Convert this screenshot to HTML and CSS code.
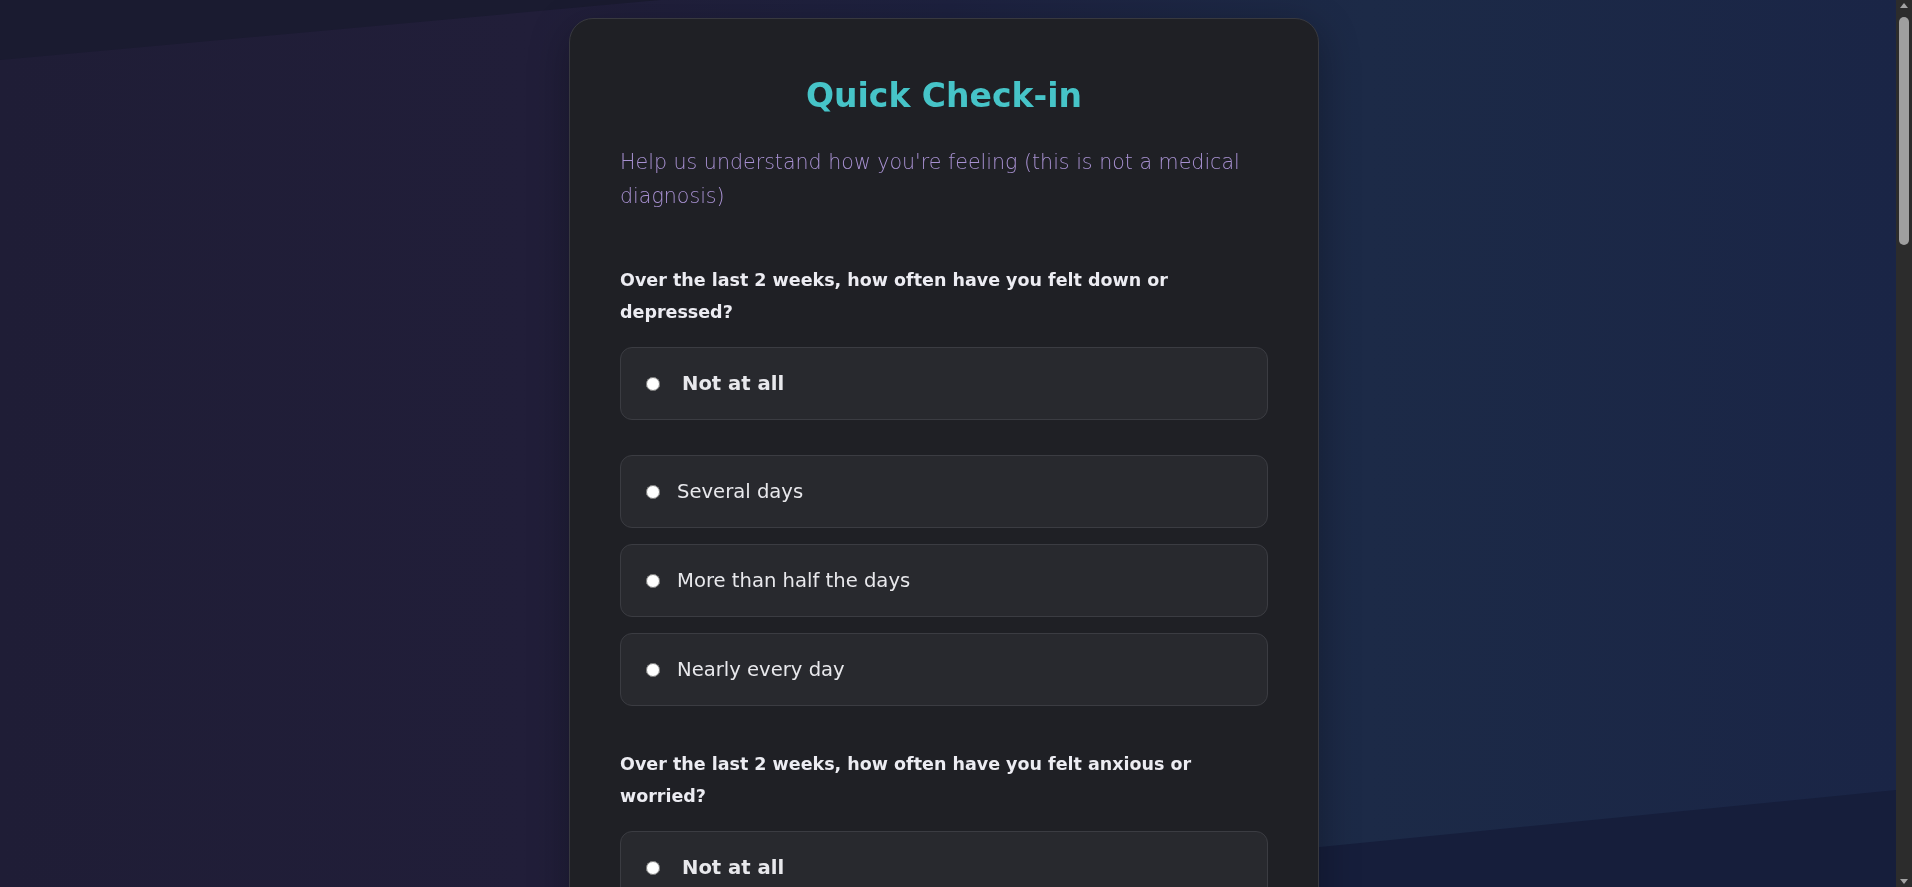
FILE: index.html
```html
<!DOCTYPE html>
<html lang="en">
<head>
<meta charset="utf-8">
<title>Quick Check-in</title>
<link rel="stylesheet" href="styles.css">
</head>
<body>
<div class="backdrop" aria-hidden="true">
  <svg viewBox="0 0 1896 887" preserveAspectRatio="none">
    <defs>
      <linearGradient id="bg" x1="0" y1="0" x2="1" y2="0">
        <stop offset="0" stop-color="#1f1d36"/>
        <stop offset="0.28" stop-color="#211e39"/>
        <stop offset="0.5" stop-color="#1d213f"/>
        <stop offset="0.72" stop-color="#1c2a47"/>
        <stop offset="1" stop-color="#1a2546"/>
      </linearGradient>
    </defs>
    <rect x="0" y="0" width="1896" height="887" fill="url(#bg)"/>
    <polygon points="0,0 660,0 0,60" fill="#1a1b30"/>
    <polygon points="915,887 1896,790 1896,887" fill="#161e3b"/>
  </svg>
</div>
<div class="scrollbar" aria-hidden="true">
  <span class="arrow up"></span>
  <span class="thumb"></span>
  <span class="arrow down"></span>
</div>
<main class="page">
  <section class="card">
    <h1 class="title">Quick Check-in</h1>
    <p class="subtitle">Help us understand how you're feeling (this is not a medical diagnosis)</p>

    <div class="question">
      <p class="q-text">Over the last 2 weeks, how often have you felt down or depressed?</p>
      <label class="option first"><input type="radio" name="q1"><span>Not at all</span></label>
      <label class="option"><input type="radio" name="q1"><span>Several days</span></label>
      <label class="option"><input type="radio" name="q1"><span>More than half the days</span></label>
      <label class="option"><input type="radio" name="q1"><span>Nearly every day</span></label>
    </div>

    <div class="question">
      <p class="q-text">Over the last 2 weeks, how often have you felt anxious or worried?</p>
      <label class="option first"><input type="radio" name="q2"><span>Not at all</span></label>
      <label class="option"><input type="radio" name="q2"><span>Several days</span></label>
      <label class="option"><input type="radio" name="q2"><span>More than half the days</span></label>
      <label class="option"><input type="radio" name="q2"><span>Nearly every day</span></label>
    </div>

    <div class="question">
      <p class="q-text">Over the last 2 weeks, how often have you had little interest or pleasure in doing things?</p>
      <label class="option first"><input type="radio" name="q3"><span>Not at all</span></label>
      <label class="option"><input type="radio" name="q3"><span>Several days</span></label>
      <label class="option"><input type="radio" name="q3"><span>More than half the days</span></label>
      <label class="option"><input type="radio" name="q3"><span>Nearly every day</span></label>
    </div>

    <div class="question">
      <p class="q-text">Over the last 2 weeks, how often have you had trouble sleeping?</p>
      <label class="option first"><input type="radio" name="q4"><span>Not at all</span></label>
      <label class="option"><input type="radio" name="q4"><span>Several days</span></label>
      <label class="option"><input type="radio" name="q4"><span>More than half the days</span></label>
      <label class="option"><input type="radio" name="q4"><span>Nearly every day</span></label>
    </div>

    <div class="question">
      <p class="q-text">Over the last 2 weeks, how often have you felt tired or had little energy?</p>
      <label class="option first"><input type="radio" name="q5"><span>Not at all</span></label>
      <label class="option"><input type="radio" name="q5"><span>Several days</span></label>
      <label class="option"><input type="radio" name="q5"><span>More than half the days</span></label>
      <label class="option"><input type="radio" name="q5"><span>Nearly every day</span></label>
    </div>

    <div class="question">
      <p class="q-text">Over the last 2 weeks, how often have you had trouble concentrating?</p>
      <label class="option first"><input type="radio" name="q6"><span>Not at all</span></label>
      <label class="option"><input type="radio" name="q6"><span>Several days</span></label>
      <label class="option"><input type="radio" name="q6"><span>More than half the days</span></label>
      <label class="option"><input type="radio" name="q6"><span>Nearly every day</span></label>
    </div>

    <button class="submit" type="button">See my results</button>
  </section>
</main>
</body>
</html>
```

FILE: styles.css
```css
html {
  color-scheme: dark;
  background: #1c2140;
}

body {
  margin: 0;
  font-family: "DejaVu Sans", "Liberation Sans", sans-serif;
  color: #ececf1;
}

.backdrop {
  position: fixed;
  top: 0;
  left: 0;
  right: 16px;
  bottom: 0;
  z-index: -1;
}

.backdrop svg {
  display: block;
  width: 100%;
  height: 100%;
}

.scrollbar {
  position: fixed;
  top: 0;
  right: 0;
  bottom: 0;
  width: 16px;
  background: #2c2c2c;
  z-index: 10;
}

.scrollbar .thumb {
  position: absolute;
  top: 17px;
  left: 3px;
  width: 10px;
  height: 228px;
  border-radius: 5px;
  background: #9f9f9f;
}

.scrollbar .arrow {
  position: absolute;
  left: 4px;
  width: 0;
  height: 0;
  border-left: 4px solid transparent;
  border-right: 4px solid transparent;
}

.scrollbar .arrow.up {
  top: 3px;
  border-bottom: 5px solid #a3a3a3;
}

.scrollbar .arrow.down {
  bottom: 3px;
  border-top: 5px solid #a3a3a3;
}

.page {
  display: flex;
  justify-content: center;
  padding: 18px 24px 18px 0;
}

.card {
  width: 750px;
  box-sizing: border-box;
  padding: 50px;
  background: #1f2025;
  border: 1px solid #38393f;
  border-radius: 24px;
  box-shadow: 0 10px 40px rgba(0, 0, 0, 0.3);
  display: flex;
  flex-direction: column;
}

.title {
  margin: 8px 0 30px;
  font-size: 33px;
  line-height: 38px;
  font-weight: 700;
  text-align: center;
  color: #46c4c8;
}

.subtitle {
  margin: 0 0 51px;
  font-size: 20.6px;
  line-height: 34px;
  font-weight: 200;
  color: #a891d2;
}

.question {
  display: flex;
  flex-direction: column;
  gap: 16px;
  margin-bottom: 42px;
}

.q-text {
  margin: 0 0 3px;
  font-size: 17.5px;
  line-height: 32px;
  font-weight: 700;
  color: #ececf2;
}

.option {
  display: flex;
  align-items: center;
  padding: 20px 20px 20px 25px;
  background: #28292e;
  border: 1px solid #3b3c42;
  border-radius: 12px;
  font-size: 19.6px;
  line-height: 31px;
  color: #e8e8ec;
  cursor: pointer;
}

.option input {
  color-scheme: light;
  width: 14px;
  height: 14px;
  margin: 0 17px 0 0;
  flex: none;
}

.option.first {
  margin-bottom: 19px;
  font-weight: 700;
}

.option.first input {
  margin-right: 22px;
}

.submit {
  align-self: stretch;
  margin-top: 8px;
  padding: 16px;
  border: none;
  border-radius: 12px;
  background: #46c4c8;
  color: #14151a;
  font: 700 18px/28px "DejaVu Sans", sans-serif;
}
```
